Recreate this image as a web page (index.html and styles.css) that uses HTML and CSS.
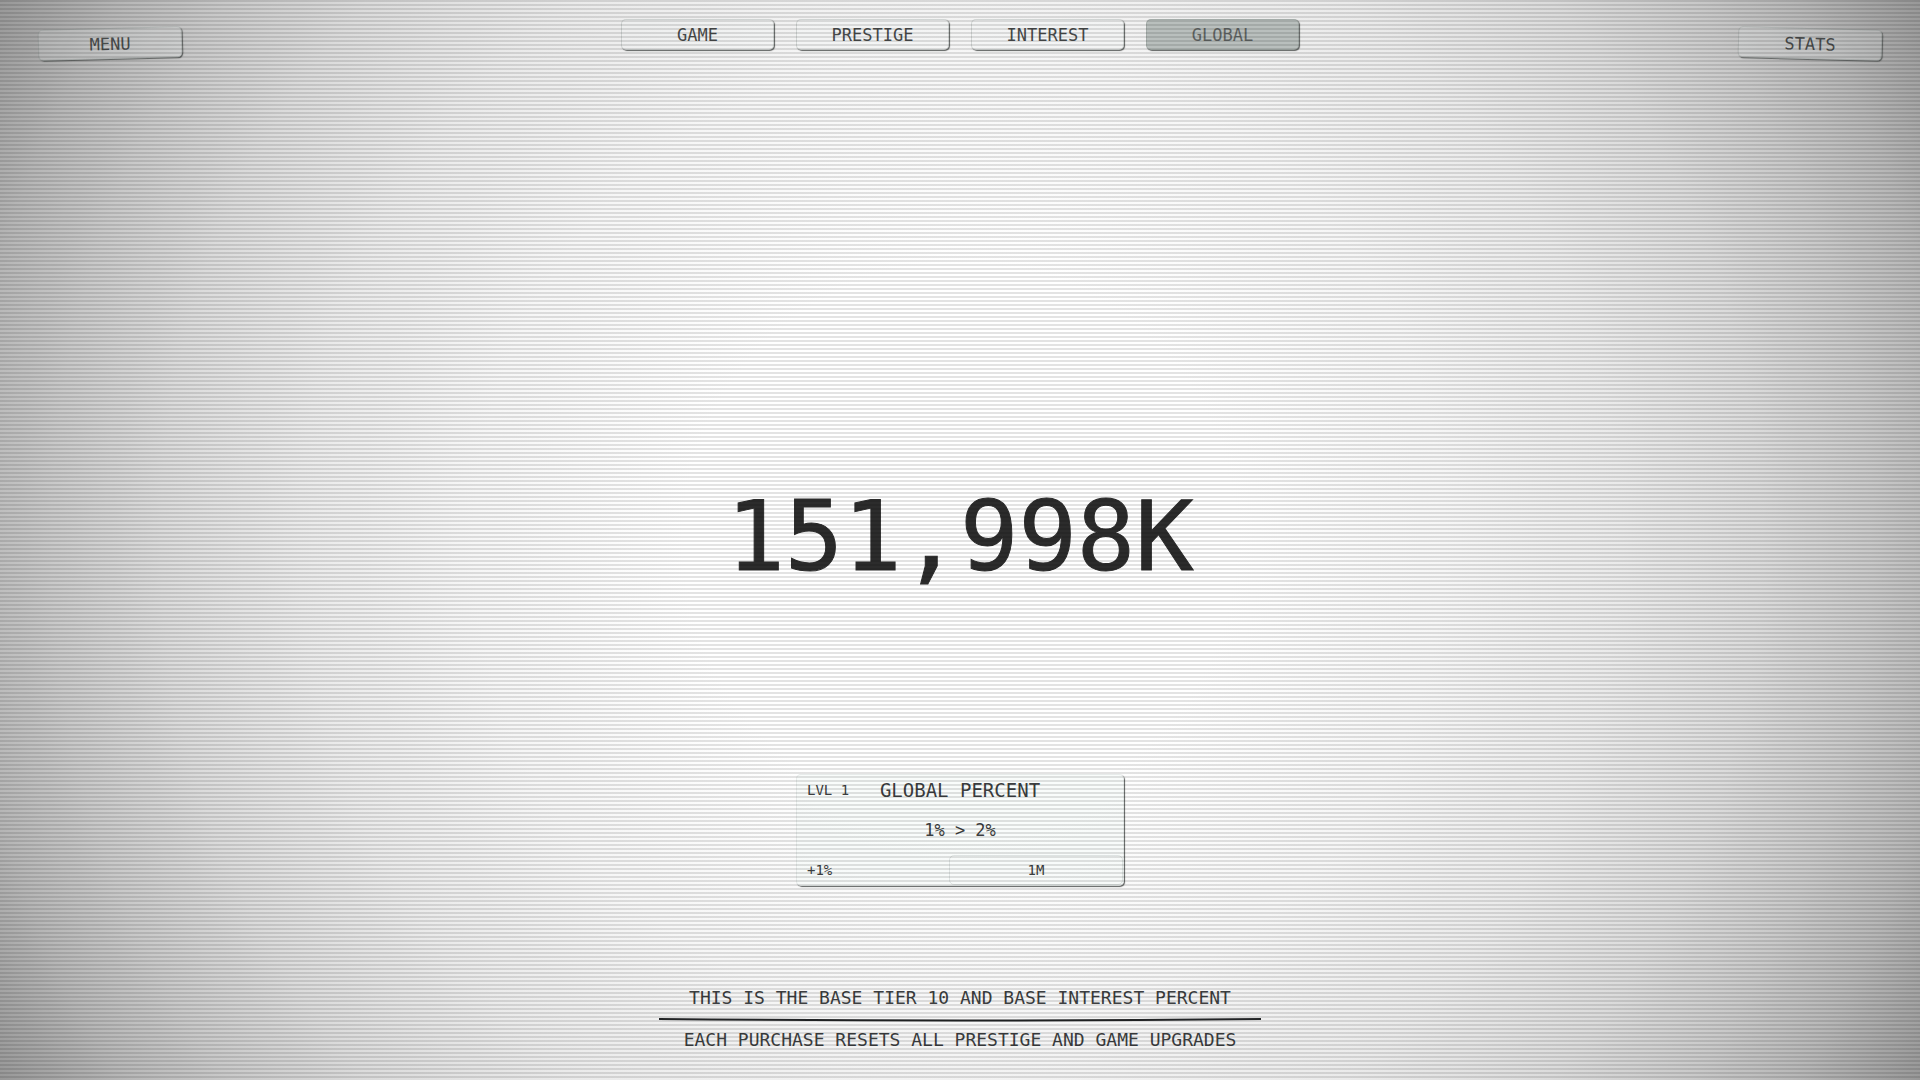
FILE: index.html
```
<!DOCTYPE html>
<html lang="en">
<head>
<meta charset="utf-8">
<meta name="viewport" content="width=device-width, initial-scale=1">
<title>Global</title>
<link rel="stylesheet" href="styles.css">
</head>
<body>
<div class="screen">
  <header class="topbar">
    <button class="btn btn-side btn-menu" type="button">MENU</button>
    <nav class="tabs">
      <button class="btn tab" type="button">GAME</button>
      <button class="btn tab" type="button">PRESTIGE</button>
      <button class="btn tab" type="button">INTEREST</button>
      <button class="btn tab tab-active" type="button" aria-current="page">GLOBAL</button>
    </nav>
    <button class="btn btn-side btn-stats" type="button">STATS</button>
  </header>

  <main class="main">
    <div class="score">151,998K</div>
    <section class="card">
      <div class="card-head">
        <span class="level">LVL 1</span>
        <h1 class="card-title">GLOBAL PERCENT</h1>
      </div>
      <p class="change">1% &gt; 2%</p>
      <div class="card-foot">
        <span class="gain">+1%</span>
        <button class="buy" type="button">1M</button>
      </div>
    </section>
  </main>

  <footer class="info">
    <p class="info-line">THIS IS THE BASE TIER 10 AND BASE INTEREST PERCENT</p>
    <svg class="rule" viewBox="0 0 602 4" preserveAspectRatio="none" aria-hidden="true"><path d="M0 1Q301 4 602 1" fill="none" stroke="#222426" stroke-width="2"/></svg>
    <p class="info-line">EACH PURCHASE RESETS ALL PRESTIGE AND GAME UPGRADES</p>
  </footer>
</div>
</body>
</html>
```
FILE: styles.css
```
* { box-sizing: border-box; }

body {
  margin: 0;
  color: #3c3e40;
  font-family: "DejaVu Sans Mono", "Liberation Mono", monospace;
  font-size: 17px;
}

.screen {
  min-height: 100vh;
  display: flex;
  flex-direction: column;
  background: radial-gradient(circle farthest-corner at center, #fff 0%, #fff 25%, #f6f6f6 44%, #eaeaea 60%, #dcdcdc 72%, #cacaca 82%, #b8b8b8 90%, #989898 100%);
}

/* scanlines over the whole screen */
.screen::after {
  content: "";
  position: fixed;
  inset: 0;
  pointer-events: none;
  background: repeating-linear-gradient(to bottom, rgba(0, 0, 0, .11) 0 2px, transparent 2px 4px);
}

.topbar {
  display: grid;
  grid-template-columns: 1fr auto 1fr;
  padding: 19px 38px 0;
}

.btn {
  height: 31px;
  padding: 0;
  border: 1px solid rgba(90, 105, 100, .22);
  border-radius: 5px;
  background: rgba(240, 250, 246, .16);
  box-shadow: 1px 1px 1px #606362;
  color: #484b4b;
  font: inherit;
  line-height: 28px;
}

.btn-side {
  width: 144px;
  margin-top: 9px;
}

.btn-menu { transform: rotate(-1.5deg); }

.btn-stats {
  justify-self: end;
  transform: rotate(1.5deg);
}

.tabs {
  display: flex;
  gap: 22px;
}

.tab { width: 153px; }

.tab-active {
  background: #b9bfbd;
  color: #606463;
}

.main {
  flex: 1;
  display: flex;
  flex-direction: column;
  align-items: center;
}

.score {
  margin-top: 420px;
  font-size: 97px;
  line-height: 116px;
  color: #2c2c2c;
  -webkit-text-stroke: 1px #2c2c2c;
}

.card {
  width: 328px;
  margin-top: 179px;
  border: 1px solid rgba(110, 125, 120, .12);
  border-radius: 5px;
  background: rgba(244, 250, 248, .5);
  box-shadow: 1px 1px 1px #606362;
}

.card-head {
  display: grid;
  grid-template-columns: 1fr auto 1fr;
  align-items: center;
  height: 30px;
  padding: 0 10px;
}

.level,
.gain { font-size: 14px; }

.card-title {
  margin: 0;
  font-size: 19px;
  font-weight: 400;
}

.change {
  margin: 0;
  text-align: center;
  line-height: 50px;
}

.card-foot {
  display: grid;
  grid-template-columns: 152px 1fr;
  align-items: center;
}

.gain { padding-left: 10px; }

.buy {
  height: 30px;
  padding: 0;
  border: 1px solid rgba(110, 125, 120, .18);
  border-radius: 5px;
  background: transparent;
  color: inherit;
  font: inherit;
  font-size: 14px;
}

.info {
  display: flex;
  flex-direction: column;
  align-items: center;
  padding-bottom: 28px;
}

.info-line {
  margin: 0;
  font-size: 18px;
  line-height: 24px;
}

.rule {
  width: 602px;
  max-width: 100%;
  height: 4px;
  margin: 8px 0 6px;
}
```
